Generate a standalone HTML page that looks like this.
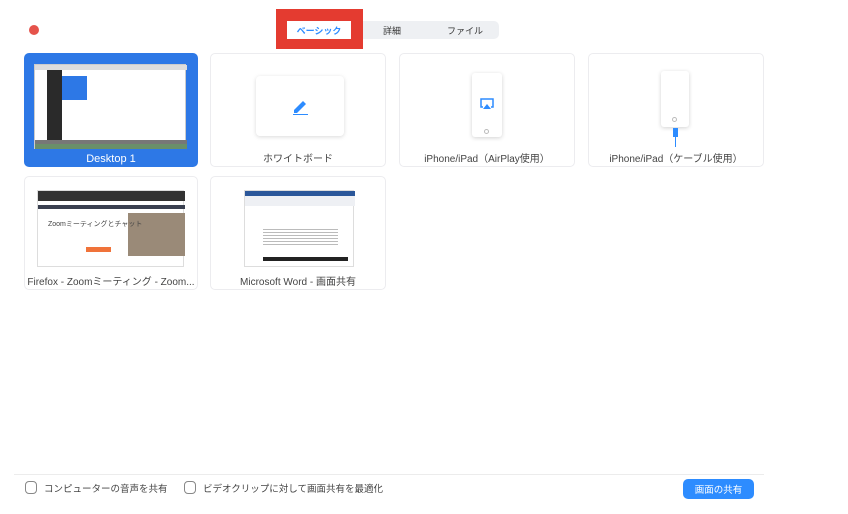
<!DOCTYPE html>
<html><head><meta charset="utf-8"><style>
*{box-sizing:border-box;margin:0;padding:0}
body{width:848px;height:514px;background:#fff;position:relative;overflow:hidden;font-family:"Liberation Sans","Noto Sans CJK JP",sans-serif;color:#333}
.a{position:absolute}
.card{position:absolute;width:176px;height:114px;border:1px solid #ececef;border-radius:5px;background:#fff}
.lbl{position:absolute;left:0;right:0;bottom:1px;text-align:center;font-size:10px;color:#444}
.t{font-size:9px;position:absolute;top:0;height:18px;display:flex;align-items:center;justify-content:center;color:#333}
</style></head><body>
<div class="a" style="left:29px;top:25px;width:10px;height:10px;border-radius:50%;background:#e5534b"></div>
<div class="a" style="left:358px;top:21px;width:141px;height:18px;background:#eef0f3;border-radius:5px"></div>
<div class="a" style="left:276px;top:9px;width:87px;height:40px;background:#e43b30"></div>
<div class="a" style="left:287px;top:21px;width:64px;height:18px;background:#fff"></div>
<div class="t" style="left:287px;top:21px;width:64px;color:#2d8cff;font-weight:bold">ベーシック</div>
<div class="t" style="left:372px;top:21px;width:40px">詳細</div>
<div class="t" style="left:440px;top:21px;width:50px">ファイル</div>

<div class="card" style="left:24px;top:53px;width:174px;background:#2d78e6;border-color:#2d78e6">
 <div class="a" style="left:9px;top:10px;width:152px;height:85px;background:#fff;border:1px solid #ccc">
  <div class="a" style="left:0;top:0;width:152px;height:5px;background:#ddd"></div>
  <div class="a" style="left:12px;top:5px;width:15px;height:70px;background:#2a2a2a"></div>
  <div class="a" style="left:27px;top:11px;width:25px;height:24px;background:#2d78e6"></div>
  <div class="a" style="left:0;top:75px;width:152px;height:4px;background:#777"></div>
  <div class="a" style="left:0;top:79px;width:152px;height:5px;background:#6a8f6a"></div>
 </div>
 <div class="lbl" style="color:#fff;font-size:11px">Desktop 1</div>
</div>

<div class="card" style="left:210px;top:53px">
 <div class="a" style="left:45px;top:22px;width:88px;height:60px;background:#fff;border-radius:4px;box-shadow:0 1px 4px rgba(0,0,0,.15)">
  <svg class="a" style="left:34px;top:20px" width="20" height="20" viewBox="0 0 20 20"><path d="M4 14 L13 5 L16 8 L7 17 L4 17 Z" fill="#2d8cff"/><path d="M3 18.5 H18" stroke="#2d8cff" stroke-width="1"/></svg>
 </div>
 <div class="lbl">ホワイトボード</div>
</div>

<div class="card" style="left:399px;top:53px">
 <div class="a" style="left:72px;top:19px;width:30px;height:64px;background:#fff;border-radius:3px;box-shadow:0 1px 4px rgba(0,0,0,.18)">
  <svg class="a" style="left:7px;top:24px" width="16" height="14" viewBox="0 0 16 14"><path d="M4 10H2V2h12v8h-2" fill="none" stroke="#2d8cff" stroke-width="1.5"/><path d="M8 7 L12 12 H4Z" fill="#2d8cff"/></svg>
  <div class="a" style="left:12px;top:56px;width:5px;height:5px;border:1px solid #bbb;border-radius:50%"></div>
 </div>
 <div class="lbl">iPhone/iPad（AirPlay使用）</div>
</div>

<div class="card" style="left:588px;top:53px">
 <div class="a" style="left:72px;top:17px;width:28px;height:56px;background:#fff;border-radius:3px;box-shadow:0 1px 4px rgba(0,0,0,.18)">
  <div class="a" style="left:11px;top:46px;width:5px;height:5px;border:1px solid #bbb;border-radius:50%"></div>
 </div>
 <div class="a" style="left:84px;top:74px;width:5px;height:9px;background:#2d8cff"></div>
 <div class="a" style="left:86px;top:83px;width:1px;height:10px;background:#2d8cff"></div>
 <div class="lbl">iPhone/iPad（ケーブル使用）</div>
</div>

<div class="card" style="left:24px;top:176px;width:174px">
 <div class="a" style="left:12px;top:13px;width:147px;height:77px;background:#fff;border:1px solid #ddd">
  <div class="a" style="left:0;top:0;width:147px;height:10px;background:#333"></div>
  <div class="a" style="left:0;top:14px;width:147px;height:4px;background:#3a4050"></div>
  <div class="a" style="left:90px;top:22px;width:57px;height:43px;background:#9a8a78"></div>
  <div class="a" style="left:10px;top:28px;font-size:7px;color:#444">Zoomミーティングとチャット</div>
  <div class="a" style="left:48px;top:56px;width:25px;height:5px;background:#f0733a"></div>
 </div>
 <div class="lbl">Firefox - Zoomミーティング - Zoom...</div>
</div>

<div class="card" style="left:210px;top:176px">
 <div class="a" style="left:33px;top:13px;width:110px;height:77px;background:#fff;border:1px solid #ddd">
  <div class="a" style="left:0;top:0;width:110px;height:5px;background:#2b579a"></div>
  <div class="a" style="left:0;top:5px;width:110px;height:10px;background:#eef0f4"></div>
  <div class="a" style="left:18px;top:36px;width:75px;height:20px;background:repeating-linear-gradient(#fff 0 2px,#bbb 2px 3px)"></div>
  <div class="a" style="left:18px;top:66px;width:85px;height:4px;background:#222"></div>
 </div>
 <div class="lbl">Microsoft Word - 画面共有</div>
</div>

<div class="a" style="left:14px;top:474px;width:750px;height:1px;background:#ececec"></div>
<div class="a" style="left:25px;top:481px;width:12px;height:13px;border:1px solid #888;border-radius:4px"></div>
<div class="a" style="left:44px;top:481px;font-size:9.5px;color:#444">コンピューターの音声を共有</div>
<div class="a" style="left:184px;top:481px;width:12px;height:13px;border:1px solid #888;border-radius:4px"></div>
<div class="a" style="left:203px;top:481px;font-size:9.5px;color:#444">ビデオクリップに対して画面共有を最適化</div>
<div class="a" style="left:683px;top:479px;width:71px;height:20px;background:#2d8cff;border-radius:5px;color:#fff;font-size:9.5px;display:flex;align-items:center;justify-content:center">画面の共有</div>
</body></html>
